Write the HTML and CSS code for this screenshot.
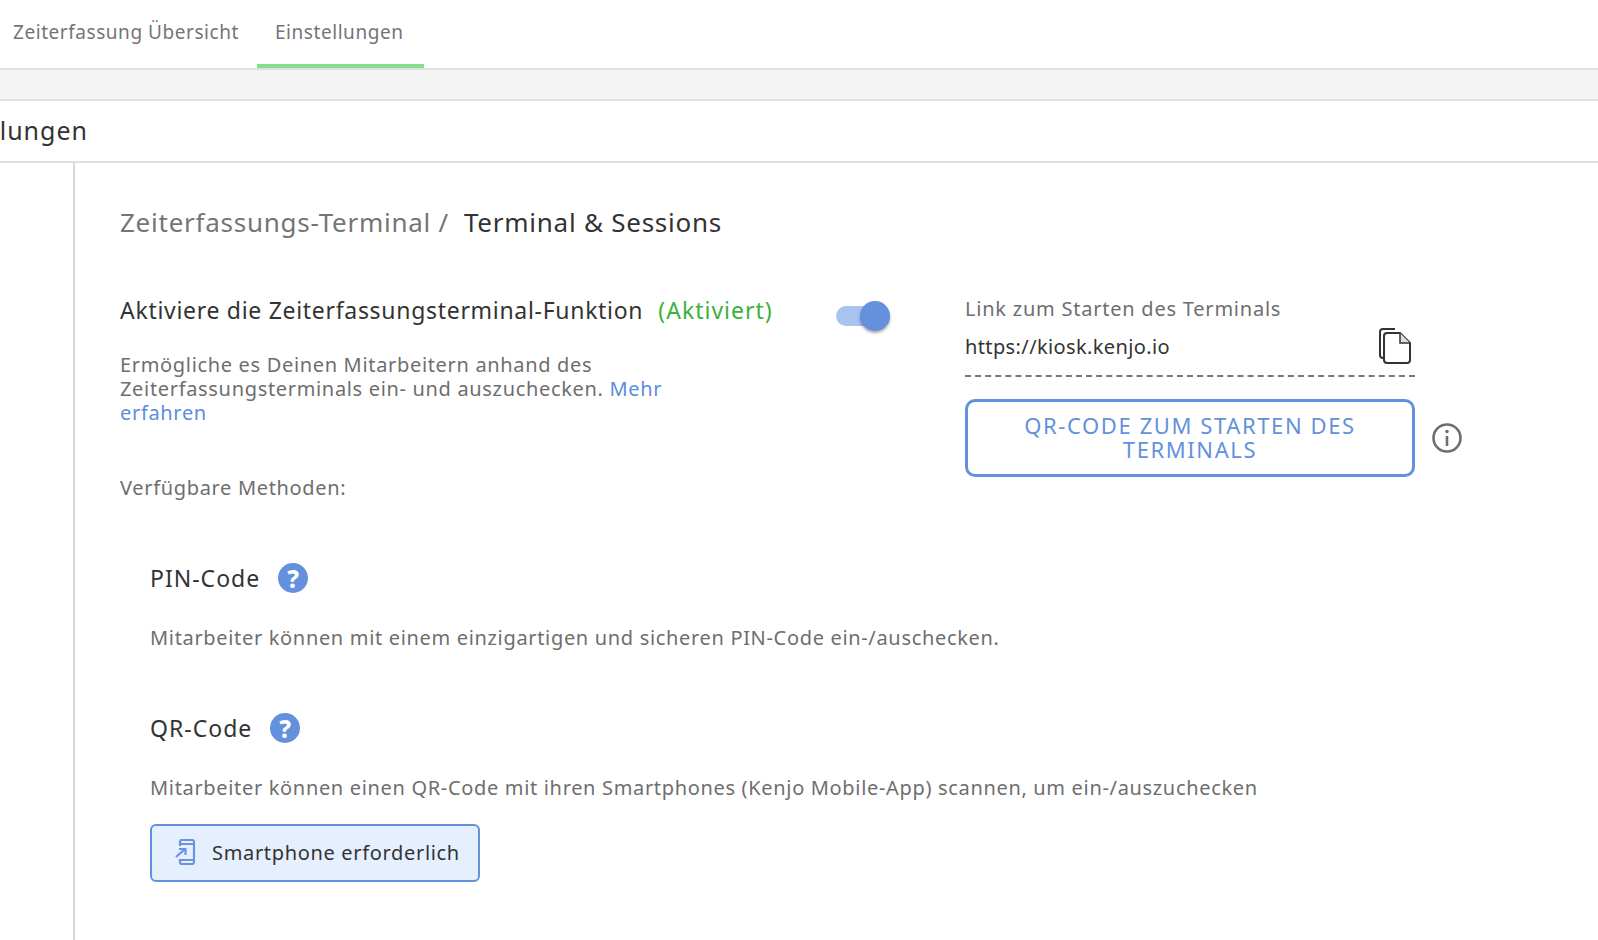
FILE: index.html
```html
<!DOCTYPE html>
<html lang="de">
<head>
    <meta charset="UTF-8">
    <title>Einstellungen</title>
    <link rel="stylesheet" href="styles.css">
</head>
<body>
<div class="tabs">
    <a class="tab" href="#">Zeiterfassung Übersicht</a>
    <a class="tab current" href="#">Einstellungen</a>
</div>
<div class="band"></div>
<div class="title-row"><div class="title-clip"><span>Einstellungen</span></div></div>
<div class="main">
    <div class="side"></div>
    <div class="content">
        <div class="crumbs">
            <span class="crumb-parent">Zeiterfassungs-Terminal /</span>
            <span class="crumb-current">Terminal &amp; Sessions</span>
        </div>
        <div class="columns">
            <div class="left">
                <div class="activate">
                    <span class="activate-label">Aktiviere die Zeiterfassungsterminal-Funktion</span>
                    <span class="activate-state">(Aktiviert)</span>
                    <span class="toggle"><span class="knob"></span></span>
                </div>
                <p class="intro">Ermögliche es Deinen Mitarbeitern anhand des Zeiterfassungsterminals ein- und auszuchecken. <a href="#">Mehr erfahren</a></p>
                <p class="methods">Verfügbare Methoden:</p>
            </div>
            <div class="right">
                <div class="link-box">
                    <div class="link-label">Link zum Starten des Terminals</div>
                    <div class="link-row">
                        <span class="link-value">https://kiosk.kenjo.io</span>
                        <svg class="copy-icon" width="34" height="36" viewBox="0 0 34 36" fill="none" stroke="#333" stroke-width="2">
                            <path d="M5 30 C3 30 2 29 2 27 V4 C2 2 3 1 5 1 H17"/>
                            <path d="M6 8 C6 6.500 7 5 9 5 H22 L32 15 V32 C32 34 31 35 29 35 H9 C7 35 6 34 6 32 Z"/>
                            <path d="M22 5 V15 H32" fill="#ddd" stroke-width="1.500"/>
                        </svg>
                    </div>
                </div>
                <div class="qr-row">
                    <a class="qr-button" href="#">QR-CODE ZUM STARTEN DES TERMINALS</a>
                    <svg class="info-icon" width="32" height="32" viewBox="0 0 32 32" fill="none" stroke="#6e6e6e" stroke-width="2.600">
                        <circle cx="16" cy="16" r="13.500"/>
                        <path d="M16 14 V24"/>
                        <circle cx="16" cy="9.500" r="1.800" fill="#6e6e6e" stroke="none"/>
                    </svg>
                </div>
            </div>
        </div>
        <div class="method">
            <div class="method-head">
                <span class="method-name">PIN-Code</span>
                <span class="help">?</span>
            </div>
            <p class="method-text">Mitarbeiter können mit einem einzigartigen und sicheren PIN-Code ein-/auschecken.</p>
        </div>
        <div class="method">
            <div class="method-head">
                <span class="method-name">QR-Code</span>
                <span class="help">?</span>
            </div>
            <p class="method-text">Mitarbeiter können einen QR-Code mit ihren Smartphones (Kenjo Mobile-App) scannen, um ein-/auszuchecken</p>
            <div class="chip">
                <svg width="22" height="26" viewBox="0 0 22 26" fill="none" stroke="#6b94e0" stroke-width="2.200">
                    <path d="M6 7 V3 C6 2 7 1 8 1 H18 C19 1 20 2 20 3 V23 C20 24 19 25 18 25 H8 C7 25 6 24 6 23 V20"/>
                    <path d="M6 5 H20 M6 21 H20"/>
                    <path d="M2 18 L11 10 M5 10 H11.500 V16"/>
                </svg>
                <span>Smartphone erforderlich</span>
            </div>
        </div>
    </div>
</div>
</body>
</html>
```
FILE: styles.css
```css
* {
    margin: 0;
    padding: 0;
    box-sizing: border-box;
}

html, body {
    height: 100%;
    overflow: hidden;
}

body {
    display: flex;
    flex-direction: column;
    font-family: "Noto Sans", "Lato", sans-serif;
    color: #333;
    background: #fff;
    font-size: 20px;
    letter-spacing: 0.67px;
}

a {
    text-decoration: none;
}

.tabs {
    display: flex;
    height: 70px;
    border-bottom: 2px solid #e0e0e0;
}

.tab {
    display: flex;
    align-items: center;
    color: #757575;
    font-size: 19px;
    letter-spacing: 0.55px;
    height: 68px;
    padding-bottom: 4px;
}

.tab:first-child {
    width: 257px;
    padding-left: 13px;
}

.tab.current {
    width: 167px;
    padding-left: 18px;
    border-bottom: 4px solid #84df8d;
    padding-bottom: 0;
}

.band {
    height: 31px;
    background: #f4f4f4;
    border-bottom: 2px solid #e0e0e0;
}

.title-row {
    height: 62px;
    border-bottom: 2px solid #e0e0e0;
    display: flex;
    align-items: center;
}

.title-clip {
    width: 88px;
    overflow: hidden;
    display: flex;
    justify-content: flex-end;
    white-space: nowrap;
    font-size: 25px;
    letter-spacing: 1px;
    color: #333;
    padding-bottom: 2px;
}

.main {
    flex: 1;
    display: flex;
    min-height: 0;
}

.side {
    width: 75px;
    border-right: 2px solid #d8d8d8;
}

.content {
    flex: 1;
    padding: 41px 0 0 45px;
}

.crumbs {
    display: flex;
    gap: 15px;
    font-size: 26px;
    letter-spacing: 0.75px;
    line-height: 36px;
}

.crumb-parent {
    color: #757575;
}

.columns {
    display: flex;
    margin-top: 52px;
    height: 268px;
}

.left {
    width: 845px;
}

.activate {
    display: flex;
    align-items: center;
    height: 36px;
    font-size: 23px;
    letter-spacing: 0.7px;
}

.activate-state {
    margin-left: 15px;
    color: #3cb13c;
    letter-spacing: 1px;
}

.toggle {
    margin: 12px 0 0 63px;
    width: 50px;
    height: 20px;
    border-radius: 10px;
    background: #aac3ee;
    position: relative;
}

.knob {
    position: absolute;
    right: -4px;
    top: -5px;
    width: 30px;
    height: 30px;
    border-radius: 50%;
    background: #6391dd;
    box-shadow: 0 2px 3px rgba(0, 0, 0, 0.35);
}

.intro {
    margin-top: 25px;
    width: 560px;
    line-height: 24px;
    color: #6e6e6e;
}

.intro a {
    color: #5c8ce0;
}

.methods {
    margin-top: 51px;
    line-height: 24px;
    color: #6e6e6e;
}

.right {
    width: 450px;
    padding-top: 3px;
}

.link-label {
    line-height: 28px;
    letter-spacing: 0.77px;
    color: #6e6e6e;
}

.link-row {
    display: flex;
    align-items: center;
    justify-content: space-between;
    height: 54px;
    padding: 0 3px 6px 0;
    border-bottom: 2px dashed #777;
    color: #333;
}

.link-value {
    letter-spacing: 0.38px;
}

.qr-row {
    display: flex;
    align-items: center;
    gap: 16px;
    margin-top: 22px;
}

.qr-button {
    flex: none;
    width: 450px;
    height: 78px;
    border: 3px solid #6391dd;
    border-radius: 10px;
    display: flex;
    align-items: center;
    justify-content: center;
    text-align: center;
    padding: 0 40px 2px;
    color: #6391dd;
    font-size: 22px;
    line-height: 24px;
    letter-spacing: 1.600px;
}

.info-icon {
    flex: none;
}

.method {
    margin-left: 30px;
}

.method + .method {
    margin-top: 60px;
}

.method-head {
    display: flex;
    align-items: center;
    gap: 18px;
    height: 36px;
    font-size: 23px;
    letter-spacing: 1px;
}

.help {
    width: 30px;
    height: 30px;
    border-radius: 50%;
    background: #6391dd;
    color: #fff;
    font-weight: 800;
    font-size: 24px;
    display: flex;
    align-items: center;
    justify-content: center;
    letter-spacing: 0;
}

.method-text {
    margin-top: 30px;
    line-height: 24px;
    color: #6e6e6e;
}

.chip {
    margin-top: 24px;
    width: 330px;
    height: 58px;
    border: 2px solid #6391dd;
    border-radius: 6px;
    background: #e5effe;
    display: flex;
    align-items: center;
    gap: 16px;
    padding: 0 0 2px 22px;
    color: #333;
}
```
